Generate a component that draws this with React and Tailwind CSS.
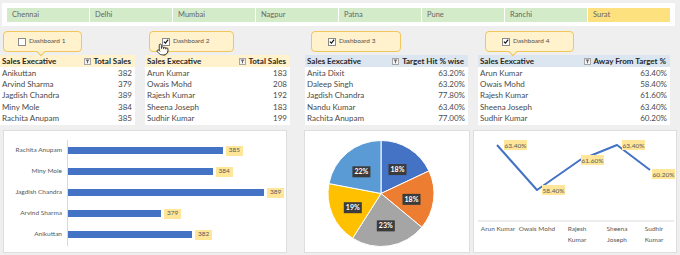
import React from "react";
import { Pointer } from "lucide-react";

const cities = ["Chennai", "Delhi", "Mumbai", "Nagpur", "Patna", "Pune", "Ranchi", "Surat"];

function CheckBox({ checked }) {
  return (
    <div className="w-[8px] h-[8px] bg-white border border-[#8a8a8a] flex items-center justify-center shrink-0">
      {checked && (
        <svg width="7" height="7" viewBox="0 0 10 10">
          <path d="M1.5 5.2 L4 7.8 L8.6 1.8" fill="none" stroke="#111" strokeWidth="2" />
        </svg>
      )}
    </div>
  );
}

function Callout({ label, checked, cls, pad, tail }) {
  return (
    <div className={`relative h-[21px] bg-[#fff2cc] border border-[#f2c65a] rounded-[4px] flex items-center ${cls} ${pad}`}>
      <CheckBox checked={checked} />
      <span className="ml-[3px] text-[6.5px] text-[#505050] leading-none">{label}</span>
      {tail && (
        <div className={`absolute bottom-[-4px] w-[6px] h-[6px] bg-[#fff2cc] border-r border-b border-[#f2c65a] rotate-45 ${tail}`} />
      )}
    </div>
  );
}

function FilterIcon() {
  return (
    <div className="w-[7px] h-[7px] border border-[#a6a6a6] bg-[#f4f4f4] flex items-center justify-center">
      <svg width="5" height="5" viewBox="0 0 10 10">
        <path d="M1 1 H9 L6 5 V9 L4 8 V5 Z" fill="#666" />
      </svg>
    </div>
  );
}

function Table({ cls, headBg, col1, col2, rows, iconGap }) {
  return (
    <div className={`bg-white h-[70px] ${cls}`}>
      <div className={`h-[12px] flex items-center justify-between pl-[2px] pr-[4px] ${headBg}`}>
        <span className="text-[8px] font-bold text-[#262626] leading-none">{col1}</span>
        <div className="flex items-center">
          <FilterIcon />
          <span className={`text-[8px] font-bold text-[#262626] leading-none ${iconGap}`}>{col2}</span>
        </div>
      </div>
      {rows.map(([a, b]) => (
        <div key={a} className="h-[11.4px] flex items-center justify-between pl-[2px] pr-[3px]">
          <span className="text-[8px] text-[#4a4a4a] leading-none">{a}</span>
          <span className="text-[8px] text-[#4a4a4a] leading-none">{b}</span>
        </div>
      ))}
    </div>
  );
}

const bars = [
  ["Rachita Anupam", 385],
  ["Miny Mole", 384],
  ["Jagdish Chandra", 389],
  ["Arvind Sharma", 379],
  ["Anikuttan", 382],
];

function BarChart() {
  return (
    <div className="ml-[3px] w-[284px] h-[123px] bg-white border border-[#dedede] flex">
      <div className="w-[63px] pt-[9px] flex flex-col">
        {bars.map(([n]) => (
          <div key={n} className="h-[21px] flex items-center justify-end pr-[5px] text-[6.5px] text-[#595959] leading-none whitespace-nowrap">
            {n}
          </div>
        ))}
      </div>
      <div className="mt-[9px] h-[106px] border-l border-[#d9d9d9] flex flex-col">
        {bars.map(([n, v]) => (
          <div key={n} className="h-[21px] flex items-center">
            <div className="h-[7px] bg-[#4472c4]" style={{ width: `${93 + 10.3 * (v - 379)}px` }} />
            <span className="ml-[3px] bg-[#ffe699] px-[3px] h-[10px] flex items-center text-[6.5px] text-[#595959] leading-none">{v}</span>
          </div>
        ))}
      </div>
    </div>
  );
}

function PieChart() {
  const cx = 76, cy = 62.5, r = 53;
  const data = [
    [18, "#4472c4"],
    [18, "#ed7d31"],
    [23, "#a5a5a5"],
    [19, "#ffc000"],
    [22, "#5b9bd5"],
  ];
  let acc = 0;
  const slices = data.map(([p, c]) => {
    const a0 = (acc / 100) * 2 * Math.PI;
    acc += p;
    const a1 = (acc / 100) * 2 * Math.PI;
    const x0 = cx + r * Math.sin(a0), y0 = cy - r * Math.cos(a0);
    const x1 = cx + r * Math.sin(a1), y1 = cy - r * Math.cos(a1);
    const large = a1 - a0 > Math.PI ? 1 : 0;
    const am = (a0 + a1) / 2;
    const lx = cx + r * 0.58 * Math.sin(am);
    const ly = cy - r * 0.58 * Math.cos(am) + 2;
    return { d: `M${cx} ${cy} L${x0} ${y0} A${r} ${r} 0 ${large} 1 ${x1} ${y1} Z`, c, p, lx, ly };
  });
  return (
    <div className="ml-[17px] w-[166px] h-[123px] bg-white border border-[#dedede]">
      <svg width="164" height="121" viewBox="0 0 164 121">
        {slices.map((s, i) => (
          <path key={i} d={s.d} fill={s.c} stroke="#fff" strokeWidth="1" />
        ))}
        {slices.map((s, i) => (
          <g key={"l" + i}>
            <rect x={s.lx - 9} y={s.ly - 5.5} width="18" height="11" fill="#3b3b3b" />
            <text x={s.lx} y={s.ly + 2.5} textAnchor="middle" fontSize="7" fontWeight="700" fill="#fff" fontFamily="Lato, sans-serif">
              {s.p}%
            </text>
          </g>
        ))}
      </svg>
    </div>
  );
}

function LineChart() {
  const pts = [
    [23, 14, "63.40%", 30],
    [63, 59, "58.40%", 68],
    [106, 29, "61.60%", 107],
    [143, 14, "63.40%", 148],
    [176, 39, "60.20%", 178],
  ];
  const labels = [
    [24, ["Arun Kumar"]],
    [63, ["Owais Mohd"]],
    [103, ["Rajesh", "Kumar"]],
    [143, ["Sheena", "Joseph"]],
    [180, ["Sudhir", "Kumar"]],
  ];
  return (
    <div className="ml-[3px] w-[204px] h-[123px] bg-white border border-[#dedede]">
      <svg width="202" height="121" viewBox="0 0 202 121" fontFamily="Lato, sans-serif">
        <line x1="4" y1="90" x2="200" y2="90" stroke="#d9d9d9" strokeWidth="1" />
        <polyline points={pts.map(p => `${p[0]},${p[1]}`).join(" ")} fill="none" stroke="#4472c4" strokeWidth="2" strokeLinejoin="round" />
        {pts.map(([x, y, t, lx], i) => (
          <g key={i}>
            <rect x={lx} y={y - 5 + (i === 4 ? 4 : 0)} width="23" height="10" fill="#ffe699" />
            <text x={lx + 11.5} y={y + 2.5 + (i === 4 ? 4 : 0)} textAnchor="middle" fontSize="6.5" fill="#595959">{t}</text>
          </g>
        ))}
        {labels.map(([x, lines], i) => (
          <text key={i} x={x} y="100" textAnchor="middle" fontSize="6.5" fill="#595959">
            {lines.map((l, j) => (
              <tspan key={j} x={x} dy={j === 0 ? 0 : 11}>{l}</tspan>
            ))}
          </text>
        ))}
      </svg>
    </div>
  );
}

export default function App() {
  return (
    <div className="w-[680px] h-[255px] bg-[#efefef] overflow-hidden relative font-['Lato',sans-serif]">
      {/* slicer */}
      <div className="h-[28px] pt-[3px] pl-[2px]">
        <div className="w-[673px] h-[23px] bg-white flex items-center gap-[1px] pl-[5px]">
          {cities.map(c => (
            <div
              key={c}
              className={`w-[82px] h-[14px] flex items-center pl-[5px] text-[7.5px] text-[#666666] ${c === "Surat" ? "bg-[#fde17f]" : "bg-[#d4ebc9]"}`}
            >
              {c}
            </div>
          ))}
        </div>
      </div>

      {/* callouts */}
      <div className="h-[27px] flex items-start pt-[3px]">
        <Callout label="Dashboard 1" checked={false} cls="ml-[3px] w-[79px]" pad="pl-[14px]" tail="left-[34px]" />
        <Callout label="Dashboard 2" checked cls="ml-[67px] w-[85px]" pad="pl-[12px]" tail="left-[12px]" />
        <Callout label="Dashboard 3" checked cls="ml-[77px] w-[90px]" pad="pl-[16px]" />
        <Callout label="Dashboard 4" checked cls="ml-[84px] w-[89px]" pad="pl-[16px]" tail="left-[24px]" />
      </div>

      {/* tables */}
      <div className="flex h-[70px]">
        <Table
          cls="w-[135px]"
          headBg="bg-[#fff2cc]"
          col1="Sales Execative"
          col2="Total Sales"
          iconGap="ml-[3px]"
          rows={[["Anikuttan", "382"], ["Arvind Sharma", "379"], ["Jagdish Chandra", "389"], ["Miny Mole", "384"], ["Rachita Anupam", "385"]]}
        />
        <Table
          cls="ml-[10px] w-[145px]"
          headBg="bg-[#fff2cc]"
          col1="Sales Execative"
          col2="Total Sales"
          iconGap="ml-[3px]"
          rows={[["Arun Kumar", "183"], ["Owais Mohd", "208"], ["Rajesh Kumar", "192"], ["Sheena Joseph", "183"], ["Sudhir Kumar", "199"]]}
        />
        <Table
          cls="ml-[15px] w-[163px]"
          headBg="bg-[#dce6f1]"
          col1="Sales Eexcative"
          col2="Target Hit % wise"
          iconGap="ml-[3px]"
          rows={[["Anita Dixit", "63.20%"], ["Daleep Singh", "63.20%"], ["Jagdish Chandra", "77.80%"], ["Nandu Kumar", "63.40%"], ["Rachita Anupam", "77.00%"]]}
        />
        <Table
          cls="ml-[10px] w-[192px]"
          headBg="bg-[#dce6f1]"
          col1="Sales Eexcative"
          col2="Away From Target %"
          iconGap="ml-[3px]"
          rows={[["Arun Kumar", "63.40%"], ["Owais Mohd", "58.40%"], ["Rajesh Kumar", "61.60%"], ["Sheena Joseph", "63.40%"], ["Sudhir Kumar", "60.20%"]]}
        />
      </div>

      {/* charts */}
      <div className="flex mt-[5px]">
        <BarChart />
        <PieChart />
        <LineChart />
      </div>

      {/* cursor */}
      <div className="absolute left-[156px] top-[43px]">
        <Pointer size={13} fill="#fff" stroke="#222" strokeWidth={1.6} />
      </div>
    </div>
  );
}
